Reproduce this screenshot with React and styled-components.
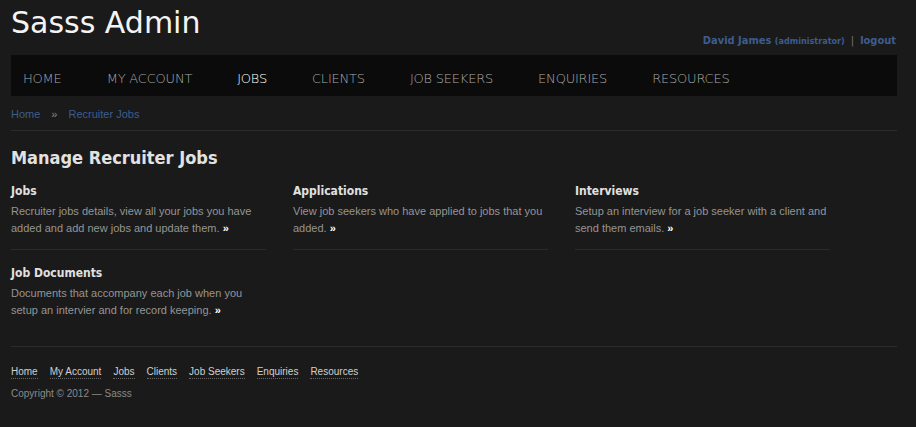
import styled, { createGlobalStyle } from "styled-components";

const GlobalStyle = createGlobalStyle`
  html, body {
    margin: 0;
    padding: 0;
    background-color: #1a1a1a;
  }
  body {
    font-family: "Liberation Sans", Arial, sans-serif;
    color: #9a9a9a;
  }
`;

const Page = styled.div`
  width: 886px;
  padding: 0 11px;
`;

const Header = styled.header`
  display: flex;
  justify-content: space-between;
  align-items: flex-end;
  height: 55px;
`;

const Logo = styled.h1`
  margin: 0;
  font-family: "DejaVu Sans", Verdana, sans-serif;
  font-size: 30px;
  font-weight: 400;
  color: #f4f4f4;
  line-height: 1;
  align-self: flex-start;
  padding-top: 8px;
`;

const UserBox = styled.div`
  padding-bottom: 8px;
  font-family: "DejaVu Sans Condensed", "DejaVu Sans", sans-serif;
  font-size: 11px;
  font-weight: bold;
  color: #3d5d8d;
  margin-right: 1px;
`;

const UserRole = styled.span`
  font-size: 9px;
`;

const Sep = styled.span`
  color: #777;
  font-weight: normal;
  margin: 0 6px;
`;

const Nav = styled.nav`
  background-color: #0b0b0b;
  height: 41px;
  box-sizing: border-box;
  padding-top: 5px;
  display: flex;
  align-items: center;
  padding-left: 12px;
  gap: 45px;
`;

const NavItem = styled.a`
  font-family: "DejaVu Sans", sans-serif;
  font-size: 13px;
  font-weight: 200;
  letter-spacing: -0.2px;
  color: ${(p) => (p.$active ? "#ffffff" : "#a8a8a8")};
  text-transform: uppercase;
  text-decoration: none;
`;

const Breadcrumb = styled.div`
  display: flex;
  gap: 11px;
  align-items: center;
  box-sizing: border-box;
  padding-top: 2px;
  height: 35px;
  font-size: 11px;
  border-bottom: 1px solid #2b2b2b;
`;

const Crumb = styled.a`
  color: #3d5d8d;
  text-decoration: none;
`;

const CrumbSep = styled.span`
  color: #888;
`;

const Title = styled.h2`
  margin: 16px 0 16px;
  font-family: "DejaVu Sans Condensed", "DejaVu Sans", sans-serif;
  font-size: 18px;
  font-weight: bold;
  color: #e2e2e2;
`;

const Grid = styled.div`
  display: grid;
  grid-template-columns: repeat(3, 255px);
  column-gap: 27px;
  row-gap: 16px;
  padding-bottom: 27px;
  border-bottom: 1px solid #2b2b2b;
`;

const Card = styled.div`
  padding-bottom: ${(p) => (p.$last ? "0" : "12px")};
  border-bottom: ${(p) => (p.$last ? "none" : "1px solid #2b2b2b")};
`;

const CardTitle = styled.h3`
  margin: 0 0 5px;
  font-family: "DejaVu Sans Condensed", "DejaVu Sans", sans-serif;
  font-size: 12px;
  font-weight: bold;
  color: #e0e0e0;
`;

const CardText = styled.p`
  margin: 0;
  font-size: 11px;
  line-height: 17px;
  color: #959595;
`;

const More = styled.b`
  color: #ffffff;
`;

const Footer = styled.footer`
  padding-top: 19px;
`;

const FooterLinks = styled.div`
  display: flex;
  gap: 12px;
  font-size: 10px;
`;

const FooterLink = styled.a`
  color: #d0d0d0;
  text-decoration: none;
  border-bottom: 1px dotted #666;
  padding-bottom: 1px;
`;

const Copyright = styled.p`
  margin: 9px 0 0;
  font-size: 10px;
  color: #8a8a8a;
`;

const navItems = [
  "Home",
  "My Account",
  "Jobs",
  "Clients",
  "Job Seekers",
  "Enquiries",
  "Resources",
];

const cards = [
  {
    title: "Jobs",
    text: "Recruiter jobs details, view all your jobs you have added and add new jobs and update them.",
  },
  {
    title: "Applications",
    text: "View job seekers who have applied to jobs that you added.",
  },
  {
    title: "Interviews",
    text: "Setup an interview for a job seeker with a client and send them emails.",
  },
  {
    title: "Job Documents",
    text: "Documents that accompany each job when you setup an intervier and for record keeping.",
  },
];

function App() {
  return (
    <>
      <GlobalStyle />
      <Page>
        <Header>
          <Logo>Sasss Admin</Logo>
          <UserBox>
            David James <UserRole>(administrator)</UserRole>
            <Sep>|</Sep>
            logout
          </UserBox>
        </Header>
        <Nav>
          {navItems.map((item) => (
            <NavItem key={item} $active={item === "Jobs"}>
              {item}
            </NavItem>
          ))}
        </Nav>
        <Breadcrumb>
          <Crumb>Home</Crumb>
          <CrumbSep>»</CrumbSep>
          <Crumb>Recruiter Jobs</Crumb>
        </Breadcrumb>
        <Title>Manage Recruiter Jobs</Title>
        <Grid>
          {cards.map((card, i) => (
            <Card key={card.title} $last={i === 3}>
              <CardTitle>{card.title}</CardTitle>
              <CardText>
                {card.text} <More>»</More>
              </CardText>
            </Card>
          ))}
        </Grid>
        <Footer>
          <FooterLinks>
            {navItems.map((item) => (
              <FooterLink key={item}>{item}</FooterLink>
            ))}
          </FooterLinks>
          <Copyright>Copyright © 2012 — Sasss</Copyright>
        </Footer>
      </Page>
    </>
  );
}

export default App;
